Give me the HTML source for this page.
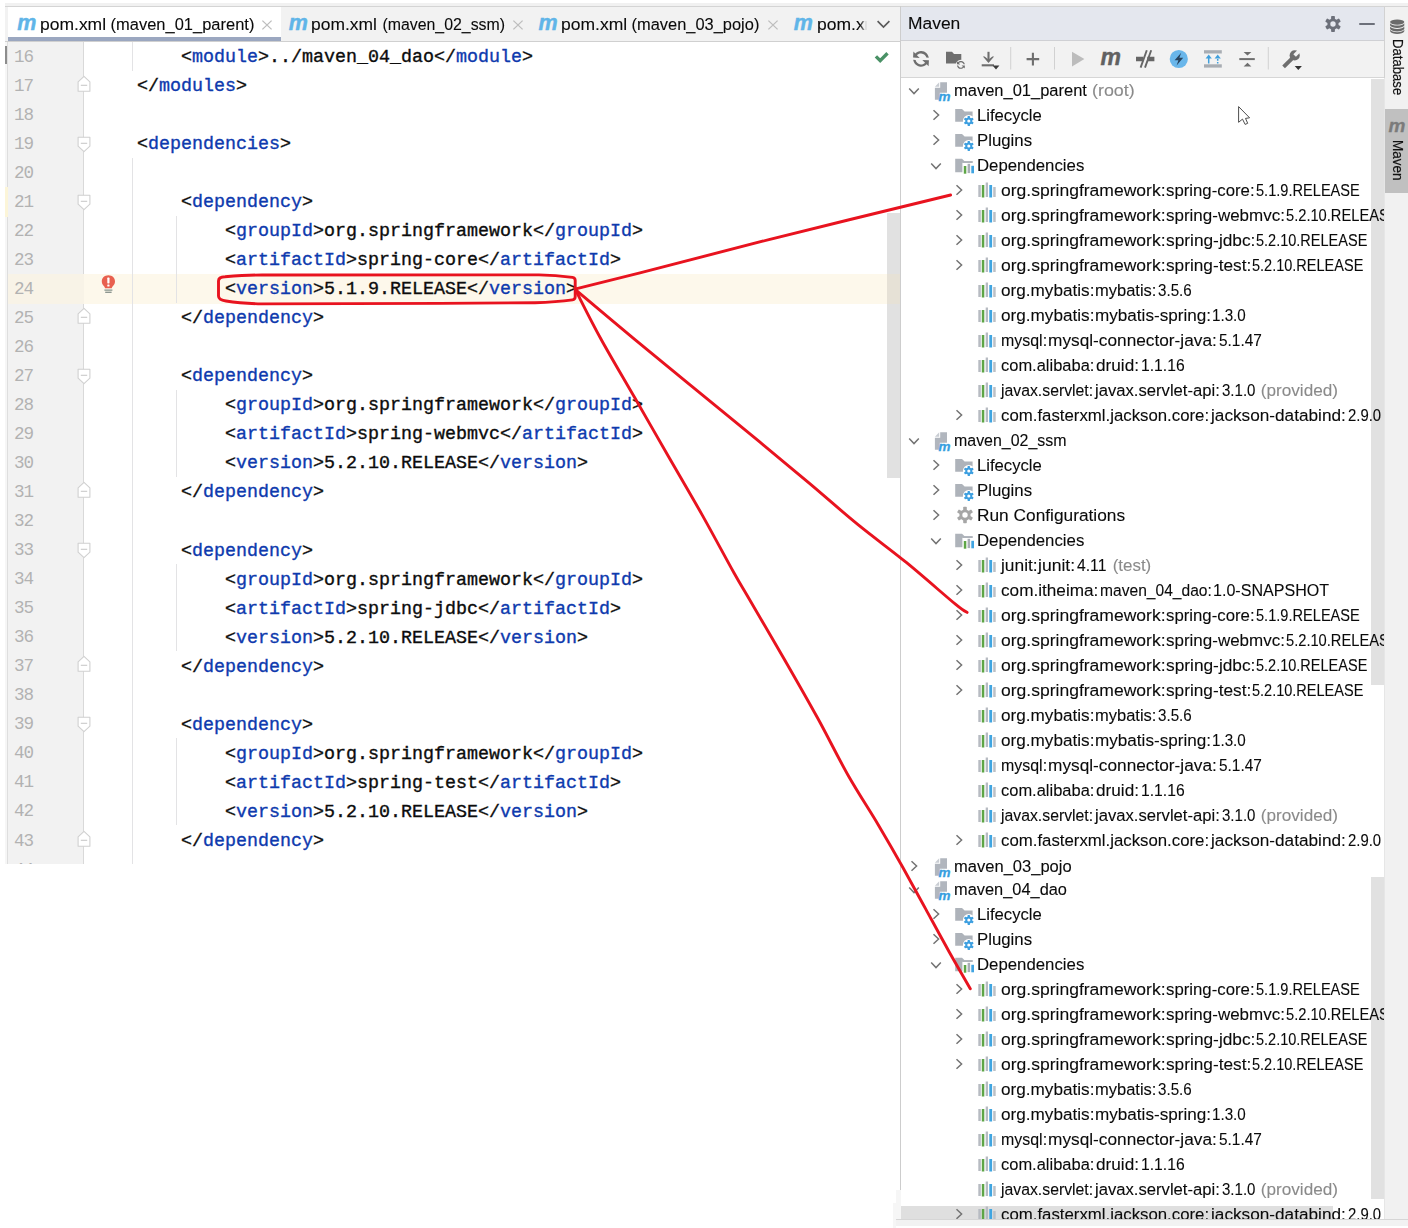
<!DOCTYPE html>
<html lang="en"><head><meta charset="utf-8"><title>pom.xml - Maven</title>
<style>
*{box-sizing:border-box;margin:0;padding:0}
html,body{width:1408px;height:1228px;overflow:hidden;background:#fff}
body{position:relative;font-family:"Liberation Sans",sans-serif;font-size:17px;color:#111}
.abs{position:absolute}
.code{position:absolute;left:0;width:887px;height:29px;line-height:29px;font-family:"Liberation Mono",monospace;font-size:18.33px;white-space:pre;color:#0c0c0c;-webkit-text-stroke:0.35px #0c0c0c;overflow:hidden}
.code .t{color:#0e3aae;-webkit-text-stroke:0.35px #0e3aae}
.ln{position:absolute;left:13.9px;width:40px;height:29px;line-height:29px;font-family:"Liberation Mono",monospace;font-size:17.6px;letter-spacing:-0.9px;color:#b2b2b2}
.row{position:absolute;transform-origin:0 0;height:25px;line-height:25px;white-space:pre;font-size:17.4px;color:#0a0a0a;-webkit-text-stroke:0.1px #0a0a0a}
.s{display:inline-block;transform-origin:0 0;white-space:pre}
.g{color:#8a8a8a;-webkit-text-stroke:0.1px #8a8a8a}
.tab{position:absolute;transform-origin:0 0;top:7px;height:30px;line-height:30px;white-space:pre;font-size:17.4px;color:#0a0a0a;-webkit-text-stroke:0.1px #0a0a0a}
.mi{position:absolute;font-style:italic;font-weight:bold;color:#60b5e8;font-size:21.5px;line-height:24px;height:24px;-webkit-text-stroke:0.45px #60b5e8}
</style></head>
<body>
<div class="abs" style="left:5px;top:3px;width:1403px;height:4px;background:#f1f1f1"></div>
<div class="abs" style="left:5px;top:6px;width:895px;height:35px;background:#f2f2f2;border-top:1px solid #d4d4d4"></div>
<div class="abs" style="left:5px;top:40.5px;width:895px;height:1px;background:#d0d0d0"></div>
<div class="abs" style="left:8px;top:7px;width:272.5px;height:30px;background:#fff"></div>
<div class="abs" style="left:8px;top:37px;width:272.5px;height:4px;background:#9ba7c0"></div>
<div class="abs" style="left:5px;top:41.5px;width:3px;height:822.5px;background:#f6f6f6"></div>
<div class="abs" style="left:7px;top:41.5px;width:1px;height:822.5px;background:#dedede"></div>
<div class="abs" style="left:8px;top:41.5px;width:75px;height:822.5px;background:#f2f2f2"></div>
<div class="abs" style="left:83px;top:41.5px;width:1px;height:822.5px;background:#d9d9d9"></div>
<div class="abs" style="left:5px;top:46px;width:2px;height:18px;background:#8d8d8d"></div>
<div class="abs" style="left:8px;top:273.74px;width:879px;height:30px;background:#fdf8eb"></div>
<div class="abs" style="left:8px;top:273.74px;width:76px;height:30px;background:#f8f3e7"></div>
<div class="abs" style="left:5px;top:186.65px;width:2.6px;height:30px;background:#fcf5d8"></div>
<div class="abs" style="left:132px;top:41.50px;width:1px;height:29.03px;background:#e3e3e5"></div>
<div class="abs" style="left:132px;top:157.62px;width:1px;height:706.38px;background:#e3e3e5"></div>
<div class="abs" style="left:176px;top:215.68px;width:1px;height:87.09px;background:#e3e3e5"></div>
<div class="abs" style="left:176px;top:389.86px;width:1px;height:87.09px;background:#e3e3e5"></div>
<div class="abs" style="left:176px;top:564.04px;width:1px;height:87.09px;background:#e3e3e5"></div>
<div class="abs" style="left:176px;top:738.22px;width:1px;height:87.09px;background:#e3e3e5"></div>
<div class="abs" style="left:887px;top:212.7px;width:13px;height:265px;background:#e1e1e1"></div>
<div class="abs" style="left:887px;top:273.74px;width:13px;height:30px;background:#e6e1d6"></div>
<div class="abs" style="left:900px;top:6px;width:1px;height:1214px;background:#cdcdcd"></div>
<div class="mi" style="left:17.3px;top:11.0px">m</div>
<div class="tab" style="left:39.79px;top:9.30px;"><span class="s" style="width:66.48px;transform:scaleX(1.0056)">pom.xml</span><span class="s" style="width:148.37px;transform:scaleX(0.9474)"> (maven_01_parent)</span></div>
<svg class="abs" style="left:261.2px;top:19px" width="12" height="12" viewBox="-6 -6 12 12"><path d="M-4.6 -4.4 L4.6 4.4 M4.6 -4.4 L-4.6 4.4" stroke="#bdbdbd" stroke-width="1.3" fill="none"/></svg>
<div class="mi" style="left:288.8px;top:11.0px">m</div>
<div class="tab" style="left:311.40px;top:9.30px;"><span class="s" style="width:66.48px;transform:scaleX(1.0024)">pom.xml</span><span class="s" style="width:127.05px;transform:scaleX(0.9128)"> (maven_02_ssm)</span></div>
<svg class="abs" style="left:511.5px;top:19px" width="12" height="12" viewBox="-6 -6 12 12"><path d="M-4.6 -4.4 L4.6 4.4 M4.6 -4.4 L-4.6 4.4" stroke="#bdbdbd" stroke-width="1.3" fill="none"/></svg>
<div class="mi" style="left:538.6px;top:11.0px">m</div>
<div class="tab" style="left:560.89px;top:9.30px;"><span class="s" style="width:66.60px;transform:scaleX(1.0071)">pom.xml</span><span class="s" style="width:132.35px;transform:scaleX(0.9442)"> (maven_03_pojo)</span></div>
<svg class="abs" style="left:767px;top:19px" width="12" height="12" viewBox="-6 -6 12 12"><path d="M-4.6 -4.4 L4.6 4.4 M4.6 -4.4 L-4.6 4.4" stroke="#bdbdbd" stroke-width="1.3" fill="none"/></svg>
<div class="mi" style="left:793.8px;top:11.0px">m</div>
<div class="tab" style="left:816.59px;top:9.30px;width:50.91px;overflow:hidden;-webkit-mask-image:linear-gradient(90deg,#000 86%,rgba(0,0,0,0) 100%);mask-image:linear-gradient(90deg,#000 86%,rgba(0,0,0,0) 100%);"><span class="s" style="width:66.07px;transform:scaleX(1.0056)">pom.xml</span></div>
<svg class="abs" style="left:876px;top:19px" width="15" height="11" viewBox="0 0 15 11"><path d="M1.6 2.2 L7.5 8 L13.4 2.2" stroke="#5a5a5a" stroke-width="1.7" fill="none"/></svg>
<div class="ln" style="top:42.70px">16</div>
<div class="code" style="top:43.00px;padding-left:181.0px">&lt;<span class="t">module</span>&gt;../maven_04_dao&lt;/<span class="t">module</span>&gt;</div>
<div class="ln" style="top:71.73px">17</div>
<div class="code" style="top:72.03px;padding-left:137.0px">&lt;/<span class="t">modules</span>&gt;</div>
<div class="ln" style="top:100.76px">18</div>
<div class="ln" style="top:129.79px">19</div>
<div class="code" style="top:130.09px;padding-left:137.0px">&lt;<span class="t">dependencies</span>&gt;</div>
<div class="ln" style="top:158.82px">20</div>
<div class="ln" style="top:187.85px">21</div>
<div class="code" style="top:188.15px;padding-left:181.0px">&lt;<span class="t">dependency</span>&gt;</div>
<div class="ln" style="top:216.88px">22</div>
<div class="code" style="top:217.18px;padding-left:225.0px">&lt;<span class="t">groupId</span>&gt;org.springframework&lt;/<span class="t">groupId</span>&gt;</div>
<div class="ln" style="top:245.91px">23</div>
<div class="code" style="top:246.21px;padding-left:225.0px">&lt;<span class="t">artifactId</span>&gt;spring-core&lt;/<span class="t">artifactId</span>&gt;</div>
<div class="ln" style="top:274.94px">24</div>
<div class="code" style="top:275.24px;padding-left:225.0px">&lt;<span class="t">version</span>&gt;5.1.9.RELEASE&lt;/<span class="t">version</span>&gt;</div>
<div class="ln" style="top:303.97px">25</div>
<div class="code" style="top:304.27px;padding-left:181.0px">&lt;/<span class="t">dependency</span>&gt;</div>
<div class="ln" style="top:333.00px">26</div>
<div class="ln" style="top:362.03px">27</div>
<div class="code" style="top:362.33px;padding-left:181.0px">&lt;<span class="t">dependency</span>&gt;</div>
<div class="ln" style="top:391.06px">28</div>
<div class="code" style="top:391.36px;padding-left:225.0px">&lt;<span class="t">groupId</span>&gt;org.springframework&lt;/<span class="t">groupId</span>&gt;</div>
<div class="ln" style="top:420.09px">29</div>
<div class="code" style="top:420.39px;padding-left:225.0px">&lt;<span class="t">artifactId</span>&gt;spring-webmvc&lt;/<span class="t">artifactId</span>&gt;</div>
<div class="ln" style="top:449.12px">30</div>
<div class="code" style="top:449.42px;padding-left:225.0px">&lt;<span class="t">version</span>&gt;5.2.10.RELEASE&lt;/<span class="t">version</span>&gt;</div>
<div class="ln" style="top:478.15px">31</div>
<div class="code" style="top:478.45px;padding-left:181.0px">&lt;/<span class="t">dependency</span>&gt;</div>
<div class="ln" style="top:507.18px">32</div>
<div class="ln" style="top:536.21px">33</div>
<div class="code" style="top:536.51px;padding-left:181.0px">&lt;<span class="t">dependency</span>&gt;</div>
<div class="ln" style="top:565.24px">34</div>
<div class="code" style="top:565.54px;padding-left:225.0px">&lt;<span class="t">groupId</span>&gt;org.springframework&lt;/<span class="t">groupId</span>&gt;</div>
<div class="ln" style="top:594.27px">35</div>
<div class="code" style="top:594.57px;padding-left:225.0px">&lt;<span class="t">artifactId</span>&gt;spring-jdbc&lt;/<span class="t">artifactId</span>&gt;</div>
<div class="ln" style="top:623.30px">36</div>
<div class="code" style="top:623.60px;padding-left:225.0px">&lt;<span class="t">version</span>&gt;5.2.10.RELEASE&lt;/<span class="t">version</span>&gt;</div>
<div class="ln" style="top:652.33px">37</div>
<div class="code" style="top:652.63px;padding-left:181.0px">&lt;/<span class="t">dependency</span>&gt;</div>
<div class="ln" style="top:681.36px">38</div>
<div class="ln" style="top:710.39px">39</div>
<div class="code" style="top:710.69px;padding-left:181.0px">&lt;<span class="t">dependency</span>&gt;</div>
<div class="ln" style="top:739.42px">40</div>
<div class="code" style="top:739.72px;padding-left:225.0px">&lt;<span class="t">groupId</span>&gt;org.springframework&lt;/<span class="t">groupId</span>&gt;</div>
<div class="ln" style="top:768.45px">41</div>
<div class="code" style="top:768.75px;padding-left:225.0px">&lt;<span class="t">artifactId</span>&gt;spring-test&lt;/<span class="t">artifactId</span>&gt;</div>
<div class="ln" style="top:797.48px">42</div>
<div class="code" style="top:797.78px;padding-left:225.0px">&lt;<span class="t">version</span>&gt;5.2.10.RELEASE&lt;/<span class="t">version</span>&gt;</div>
<div class="ln" style="top:826.51px">43</div>
<div class="code" style="top:826.81px;padding-left:181.0px">&lt;/<span class="t">dependency</span>&gt;</div>
<div class="ln" style="top:855.54px">44</div>
<svg class="abs" style="left:75.7px;top:73.83px" width="16" height="22" viewBox="-8 -11 16 22"><path d="M-5.9 6.2 H5.9 V-3.2 L0 -8.7 L-5.9 -3.2 Z" fill="#fff" stroke="#d0d0d0" stroke-width="1.1" stroke-linejoin="round"/><path d="M-3.2 0.3 H3.2" stroke="#c9c9c9" stroke-width="1.1"/></svg>
<svg class="abs" style="left:75.7px;top:131.89px" width="16" height="22" viewBox="-8 -11 16 22"><path d="M-5.9 -5.8 H5.9 V3.2 L0 8.7 L-5.9 3.2 Z" fill="#fff" stroke="#d0d0d0" stroke-width="1.1" stroke-linejoin="round"/><path d="M-3.2 0.3 H3.2" stroke="#c9c9c9" stroke-width="1.1"/></svg>
<svg class="abs" style="left:75.7px;top:189.95px" width="16" height="22" viewBox="-8 -11 16 22"><path d="M-5.9 -5.8 H5.9 V3.2 L0 8.7 L-5.9 3.2 Z" fill="#fff" stroke="#d0d0d0" stroke-width="1.1" stroke-linejoin="round"/><path d="M-3.2 0.3 H3.2" stroke="#c9c9c9" stroke-width="1.1"/></svg>
<svg class="abs" style="left:75.7px;top:306.07px" width="16" height="22" viewBox="-8 -11 16 22"><path d="M-5.9 6.2 H5.9 V-3.2 L0 -8.7 L-5.9 -3.2 Z" fill="#fff" stroke="#d0d0d0" stroke-width="1.1" stroke-linejoin="round"/><path d="M-3.2 0.3 H3.2" stroke="#c9c9c9" stroke-width="1.1"/></svg>
<svg class="abs" style="left:75.7px;top:364.13px" width="16" height="22" viewBox="-8 -11 16 22"><path d="M-5.9 -5.8 H5.9 V3.2 L0 8.7 L-5.9 3.2 Z" fill="#fff" stroke="#d0d0d0" stroke-width="1.1" stroke-linejoin="round"/><path d="M-3.2 0.3 H3.2" stroke="#c9c9c9" stroke-width="1.1"/></svg>
<svg class="abs" style="left:75.7px;top:480.25px" width="16" height="22" viewBox="-8 -11 16 22"><path d="M-5.9 6.2 H5.9 V-3.2 L0 -8.7 L-5.9 -3.2 Z" fill="#fff" stroke="#d0d0d0" stroke-width="1.1" stroke-linejoin="round"/><path d="M-3.2 0.3 H3.2" stroke="#c9c9c9" stroke-width="1.1"/></svg>
<svg class="abs" style="left:75.7px;top:538.31px" width="16" height="22" viewBox="-8 -11 16 22"><path d="M-5.9 -5.8 H5.9 V3.2 L0 8.7 L-5.9 3.2 Z" fill="#fff" stroke="#d0d0d0" stroke-width="1.1" stroke-linejoin="round"/><path d="M-3.2 0.3 H3.2" stroke="#c9c9c9" stroke-width="1.1"/></svg>
<svg class="abs" style="left:75.7px;top:654.43px" width="16" height="22" viewBox="-8 -11 16 22"><path d="M-5.9 6.2 H5.9 V-3.2 L0 -8.7 L-5.9 -3.2 Z" fill="#fff" stroke="#d0d0d0" stroke-width="1.1" stroke-linejoin="round"/><path d="M-3.2 0.3 H3.2" stroke="#c9c9c9" stroke-width="1.1"/></svg>
<svg class="abs" style="left:75.7px;top:712.49px" width="16" height="22" viewBox="-8 -11 16 22"><path d="M-5.9 -5.8 H5.9 V3.2 L0 8.7 L-5.9 3.2 Z" fill="#fff" stroke="#d0d0d0" stroke-width="1.1" stroke-linejoin="round"/><path d="M-3.2 0.3 H3.2" stroke="#c9c9c9" stroke-width="1.1"/></svg>
<svg class="abs" style="left:75.7px;top:828.61px" width="16" height="22" viewBox="-8 -11 16 22"><path d="M-5.9 6.2 H5.9 V-3.2 L0 -8.7 L-5.9 -3.2 Z" fill="#fff" stroke="#d0d0d0" stroke-width="1.1" stroke-linejoin="round"/><path d="M-3.2 0.3 H3.2" stroke="#c9c9c9" stroke-width="1.1"/></svg>
<svg class="abs" style="left:100px;top:274px" width="17" height="21" viewBox="0 0 17 21">
<path d="M8.4 1.3 C4.4 1.3 1.8 4.2 1.8 7.4 C1.8 9.6 2.9 11 4 12.2 C4.7 12.9 4.9 13.4 5 14.2 H11.8 C11.9 13.4 12.1 12.9 12.8 12.2 C13.9 11 15 9.6 15 7.4 C15 4.2 12.4 1.3 8.4 1.3 Z" fill="#e8604f"/>
<rect x="7.3" y="3.6" width="2.2" height="5.8" rx="0.6" fill="#fff"/><rect x="7.3" y="10.4" width="2.2" height="2.1" rx="0.6" fill="#fff"/>
<rect x="4.4" y="15.4" width="8" height="1.5" fill="#9aa39c"/><rect x="5.2" y="17.6" width="6.4" height="1.4" fill="#8d9690"/>
</svg>
<svg class="abs" style="left:870px;top:48px" width="24" height="20" viewBox="870 48 24 20"><path d="M875.9 56.4 L880.2 60.6 L887.5 53.3" stroke="#4a9166" stroke-width="3.4" fill="none"/></svg>
<div class="abs" style="left:0;top:864px;width:900px;height:364px;background:#fff"></div>
<div class="abs" style="left:0;top:0;width:5px;height:1228px;background:#fff"></div>
<div class="abs" style="left:901px;top:7px;width:484px;height:33.5px;background:#e4e7ee"></div>
<div class="abs" style="left:901px;top:6px;width:507px;height:1px;background:#d4d4d4"></div>
<div class="abs" style="left:901px;top:40px;width:484px;height:1px;background:#cfd0d4"></div>
<div class="abs" style="left:901px;top:41px;width:484px;height:36.5px;background:#f2f2f2"></div>
<div class="abs" style="left:901px;top:77px;width:484px;height:1px;background:#d6d6d6"></div>
<div class="row" style="left:907.80px;top:11.30px;"><span class="s" style="width:52.27px;transform:scaleX(1.0015)">Maven</span></div>
<svg class="abs" style="left:1324px;top:15px" width="18" height="18" viewBox="-9 -9 18 18">
<g fill="#6c707a"><circle r="5.6"/>
<g id="tg"><rect x="-1.9" y="-8" width="3.8" height="16" rx="0.8"/></g><rect x="-1.9" y="-8" width="3.8" height="16" rx="0.8" transform="rotate(60)"/><rect x="-1.9" y="-8" width="3.8" height="16" rx="0.8" transform="rotate(120)"/></g>
<circle r="2.7" fill="#e4e7ee"/></svg>
<div class="abs" style="left:1359px;top:22.7px;width:15.5px;height:2.5px;background:#6c707a;border-radius:1px"></div>
<svg class="abs" style="left:0;top:0" width="1408" height="80" viewBox="0 0 1408 80"><g transform="translate(910.52,48.42) scale(1.31)"><path fill="#6e6e6e" fill-rule="evenodd" d="M12.5747152,11.8852806 C11.4741474,13.1817355 9.83247882,14.0044386 7.99865879,14.0044386 C5.03907292,14.0044386 2.57997332,11.8615894 2.08820756,9.0427473 L3.94774327,9.10768372 C4.43372186,10.8898575 6.06393114,12.2000519 8.00015362,12.2000519 C9.30149237,12.2000519 10.4645985,11.6082097 11.2349873,10.6790094 L9.05000019,8.71167959 L14.0900002,8.71167959 L14.0900002,13.2498599 L12.5747152,11.8852806 Z M3.42785637,4.11741586 C4.52839138,2.82452748 6.16775464,2.00443857 7.99865879,2.00443857 C10.918604,2.00443857 13.3513802,4.09026967 13.8882946,6.8532307 L12.0226389,6.78808057 C11.5024872,5.05935553 9.89838095,3.8000774 8.00015362,3.8000774 C6.69867367,3.8000774 5.53545628,4.39204806 4.76506921,5.32142241 L6.95000019,7.28875221 L1.91000019,7.28875221 L1.91000019,2.75057193 L3.42785637,4.11741586 Z" transform="rotate(3 8 8.004)"/></g><path d="M946 51.8 H952 L954 54 H961.3 V63.6 H946 Z" fill="#6e6e6e"/><circle cx="960.9" cy="64.9" r="5.2" fill="#f2f2f2"/><g transform="translate(955.62,59.62) scale(0.66)"><path fill="#6e6e6e" fill-rule="evenodd" d="M12.5747152,11.8852806 C11.4741474,13.1817355 9.83247882,14.0044386 7.99865879,14.0044386 C5.03907292,14.0044386 2.57997332,11.8615894 2.08820756,9.0427473 L3.94774327,9.10768372 C4.43372186,10.8898575 6.06393114,12.2000519 8.00015362,12.2000519 C9.30149237,12.2000519 10.4645985,11.6082097 11.2349873,10.6790094 L9.05000019,8.71167959 L14.0900002,8.71167959 L14.0900002,13.2498599 L12.5747152,11.8852806 Z M3.42785637,4.11741586 C4.52839138,2.82452748 6.16775464,2.00443857 7.99865879,2.00443857 C10.918604,2.00443857 13.3513802,4.09026967 13.8882946,6.8532307 L12.0226389,6.78808057 C11.5024872,5.05935553 9.89838095,3.8000774 8.00015362,3.8000774 C6.69867367,3.8000774 5.53545628,4.39204806 4.76506921,5.32142241 L6.95000019,7.28875221 L1.91000019,7.28875221 L1.91000019,2.75057193 L3.42785637,4.11741586 Z" transform="rotate(3 8 8.004)"/></g><path d="M988.5 51.8 V61" stroke="#6e6e6e" stroke-width="2.1" fill="none"/><path d="M982.9 56.6 L988.5 62.9 L994.1 56.6 L992.4 56.6 L988.5 59.6 L984.6 56.6 Z" fill="#6e6e6e"/><path d="M981.7 65.3 H994" stroke="#6e6e6e" stroke-width="2.1"/><path d="M992.6 65.6 H999.4 L996 69.4 Z" fill="#3a3a3a"/><rect x="1010.2" y="47" width="1" height="22.5" fill="#d1d1d1"/><path d="M1026.6 59.1 H1039.2 M1032.9 52.8 V65.4" stroke="#6e6e6e" stroke-width="2.1"/><rect x="1054" y="47" width="1" height="22.5" fill="#d1d1d1"/><path d="M1072 51.8 V66.4 L1084.4 59.1 Z" fill="#bcbcbc"/><path d="M1136 59 H1143.3 M1147.3 59 H1154.4" stroke="#666" stroke-width="4.3"/><path d="M1146.8 50.2 L1140.6 67.6 M1151.2 50.2 L1145 67.6" stroke="#666" stroke-width="1.9"/><circle cx="1178.8" cy="59" r="9.1" fill="#69b6ea"/><path d="M1181.2 52.8 L1174.6 60.2 H1178.4 L1176.6 65.6 L1183.2 57.8 H1179.4 Z" fill="#27435e"/><rect x="1204" y="50.2" width="17.8" height="3.3" fill="#a8adb3"/><rect x="1204" y="64.3" width="17.8" height="3.3" fill="#a8adb3"/><path d="M1208.7 63.5 V57" stroke="#3f9fdc" stroke-width="1.5"/><path d="M1205.6 58.6 L1208.7 54.6 L1211.8 58.6 Z" fill="#3f9fdc"/><path d="M1217.7 63.5 V57" stroke="#3f9fdc" stroke-width="1.5" stroke-dasharray="1.6 1.2"/><path d="M1214.6 58.6 L1217.7 54.6 L1220.8 58.6 Z" fill="#3f9fdc"/><path d="M1243.6 51.9 H1251.4 L1247.5 55.6 Z M1243.6 66.5 H1251.4 L1247.5 62.8 Z" fill="#6e6e6e"/><path d="M1239.3 59.1 H1254.8" stroke="#6e6e6e" stroke-width="2"/><rect x="1267.8" y="47" width="1" height="22.5" fill="#d1d1d1"/><path d="M1283.6 66.9 L1293.2 57.4" stroke="#6e6e6e" stroke-width="3.9"/><circle cx="1294.7" cy="55.4" r="5.1" fill="#6e6e6e"/><path d="M1294.6 55.5 L1300.6 49.5" stroke="#f2f2f2" stroke-width="3.7"/><path d="M1294.7 66 H1301.9 L1298.3 70 Z" fill="#333"/></svg>
<div class="abs" style="left:1100.5px;top:44.6px;font-size:23px;line-height:24px;font-style:italic;font-weight:bold;color:#616161;-webkit-text-stroke:0.4px #616161">m</div>
<div class="abs" style="left:1385px;top:7px;width:23px;height:1213px;background:#f1f1f1"></div>
<div class="abs" style="left:1384px;top:7px;width:1px;height:71px;background:#d2d2d2"></div>
<div class="abs" style="left:1384px;top:78px;width:1px;height:1141px;background:#e6e6e6"></div>
<div class="abs" style="left:1385px;top:108.5px;width:23px;height:84.7px;background:#c0c0c0"></div>
<div class="abs" id="vdb" style="left:1386.6px;top:39.2px;width:22px;font-size:15px;line-height:22px;writing-mode:vertical-rl;white-space:pre;transform-origin:0 0;transform:scaleY(0.875);color:#111;-webkit-text-stroke:0.2px #111">Database</div>
<div class="abs" id="vmv" style="left:1386.6px;top:140.3px;width:22px;font-size:15px;line-height:22px;writing-mode:vertical-rl;white-space:pre;transform-origin:0 0;transform:scaleY(0.9);color:#111;-webkit-text-stroke:0.2px #111">Maven</div>
<div class="abs" style="left:1388.6px;top:115.6px;font-size:19px;line-height:20px;font-style:italic;font-weight:bold;color:#7b7b7b;-webkit-text-stroke:0.3px #7b7b7b">m</div>
<svg class="abs" style="left:1389px;top:18px" width="17" height="17" viewBox="0 0 17 17"><g fill="#6a6a6a" transform="translate(0 0.2) scale(1 0.95)">
<ellipse cx="8.2" cy="4.1" rx="7.1" ry="2.8"/>
<path d="M1.1 5.2 C2.6 8.67 13.8 8.67 15.3 5.2 V7.8 C13.8 11.27 2.6 11.27 1.1 7.8 Z"/>
<path d="M1.1 8.7 C2.6 12.17 13.8 12.17 15.3 8.7 V11.3 C13.8 14.77 2.6 14.77 1.1 11.3 Z"/>
<path d="M1.1 12.2 C2.6 15.67 13.8 15.67 15.3 12.2 V13.8 C13.8 17.5 2.6 17.5 1.1 13.8 Z"/></g></svg>
<div class="abs" style="left:1371.3px;top:79.3px;width:12.7px;height:605.5px;background:#e1e1e1"></div>
<div class="abs" style="left:1371.3px;top:876.5px;width:12.7px;height:322.8px;background:#e1e1e1"></div>
<div class="abs" style="left:901px;top:1206px;width:431.5px;height:13px;background:#dfdfdf"></div>
<div class="abs" style="left:896px;top:1190px;width:4.5px;height:29px;background:#f6f6f6"></div>
<div class="abs" style="left:893px;top:1202.5px;width:3.2px;height:25.5px;background:#f6f6f6"></div>
<div class="abs" style="left:896px;top:1219px;width:512px;height:7px;background:#f2f2f2;border-top:1px solid #d6d6d6"></div>
<div class="abs" style="left:896.2px;top:1226px;width:512px;height:2px;background:#fff"></div>
<div class="abs" style="left:901px;top:78px;width:483px;height:1141px;overflow:hidden"><div class="abs" style="left:-901px;top:-78px;width:1408px;height:1228px">
<svg class="abs" style="left:906.5px;top:85.5px" width="14" height="10" viewBox="-7 -5 14 10"><path d="M-4.8 -2.4 L0 2.6 L4.8 -2.4" stroke="#737373" stroke-width="1.5" fill="none"/></svg>
<svg class="abs" style="left:933.0px;top:80.2px" width="20" height="22" viewBox="0 0 20 22">
<path d="M7.2 2.3 H14 V12.8 H6.8 V19.7 H1.9 V7.8 H7.2 Z" fill="#b1b6be"/><path d="M6.2 2.3 V6.8 H1.9 Z" fill="#c9cdd3"/>
<text x="5.4" y="20.8" font-family="Liberation Sans, sans-serif" font-size="13.5" font-style="italic" font-weight="bold" fill="#389fe0" stroke="#389fe0" stroke-width="0.3">m</text></svg>
<div class="row" style="left:954.05px;top:78.00px;"><span class="s" style="width:133.45px;transform:scaleX(0.9479)">maven_01_parent</span><span class="s g" style="width:47.71px;transform:scaleX(1.0287)"> (root)</span></div>
<svg class="abs" style="left:931.0px;top:108.2px" width="10" height="14" viewBox="-5 -7 10 14"><path d="M-2.5 -4.8 L2.6 0 L-2.5 4.8" stroke="#737373" stroke-width="1.5" fill="none"/></svg>
<svg class="abs" style="left:955.0px;top:105.2px" width="22" height="22" viewBox="0 0 22 22">
<path d="M0.2 3.9 H7 L9.6 6.4 H17.6 V16.7 H0.2 Z" fill="#aeb3ba"/><g transform="translate(13.8,16)"><circle r="5.9" fill="#fff"/><g fill="#3d9fe0"><circle r="3.5"/><rect x="-1.15" y="-5" width="2.3" height="10" rx="0.5" transform="rotate(0)"/><rect x="-1.15" y="-5" width="2.3" height="10" rx="0.5" transform="rotate(60)"/><rect x="-1.15" y="-5" width="2.3" height="10" rx="0.5" transform="rotate(120)"/></g><circle r="1.55" fill="#fff"/></g></svg>
<div class="row" style="left:977.14px;top:103.00px;"><span class="s" style="width:64.80px;transform:scaleX(0.9577)">Lifecycle</span></div>
<svg class="abs" style="left:931.0px;top:133.2px" width="10" height="14" viewBox="-5 -7 10 14"><path d="M-2.5 -4.8 L2.6 0 L-2.5 4.8" stroke="#737373" stroke-width="1.5" fill="none"/></svg>
<svg class="abs" style="left:955.0px;top:130.2px" width="22" height="22" viewBox="0 0 22 22">
<path d="M0.2 3.9 H7 L9.6 6.4 H17.6 V16.7 H0.2 Z" fill="#aeb3ba"/><g transform="translate(13.8,16)"><circle r="5.9" fill="#fff"/><g fill="#3d9fe0"><circle r="3.5"/><rect x="-1.15" y="-5" width="2.3" height="10" rx="0.5" transform="rotate(0)"/><rect x="-1.15" y="-5" width="2.3" height="10" rx="0.5" transform="rotate(60)"/><rect x="-1.15" y="-5" width="2.3" height="10" rx="0.5" transform="rotate(120)"/></g><circle r="1.55" fill="#fff"/></g></svg>
<div class="row" style="left:977.13px;top:128.00px;"><span class="s" style="width:55.07px;transform:scaleX(0.9655)">Plugins</span></div>
<svg class="abs" style="left:929.0px;top:160.5px" width="14" height="10" viewBox="-7 -5 14 10"><path d="M-4.8 -2.4 L0 2.6 L4.8 -2.4" stroke="#737373" stroke-width="1.5" fill="none"/></svg>
<svg class="abs" style="left:955.0px;top:155.2px" width="22" height="22" viewBox="0 0 22 22">
<path d="M0.2 3.7 H7 L9.6 6.2 H17.6 V17.2 H0.2 Z" fill="#aeb3ba"/><rect x="7.4" y="7.6" width="14" height="13" fill="#fff"/>
<path d="M7.4 6.2 H17.6 V8 H7.4 Z" fill="#aeb3ba"/>
<rect x="8.8" y="11" width="2.5" height="7.7" fill="#5da546"/><rect x="12.6" y="8.8" width="2.5" height="9.3" fill="#a9aeb6"/><rect x="16.3" y="10.8" width="2.7" height="7.5" fill="#3fa4e2"/></svg>
<div class="row" style="left:977.14px;top:153.00px;"><span class="s" style="width:107.27px;transform:scaleX(0.9648)">Dependencies</span></div>
<svg class="abs" style="left:954.0px;top:183.2px" width="10" height="14" viewBox="-5 -7 10 14"><path d="M-2.5 -4.8 L2.6 0 L-2.5 4.8" stroke="#737373" stroke-width="1.5" fill="none"/></svg>
<svg class="abs" style="left:978.0px;top:181.2px" width="19" height="18" viewBox="0 0 19 18">
<rect x="0.3" y="4" width="2.5" height="12" fill="#b7bbc2"/><rect x="3.8" y="4" width="2.5" height="12.5" fill="#5ea547"/><rect x="7.7" y="1.5" width="2.3" height="14.5" fill="#b7bbc2"/><rect x="11.3" y="4" width="2.8" height="12.5" fill="#40a5e1"/><rect x="15.2" y="6" width="2.5" height="10" fill="#bcc0c6"/></svg>
<div class="row" style="left:1001.30px;top:178.00px;"><span class="s" style="width:164.90px;transform:scaleX(1.0074)">org.springframework:</span><span class="s" style="width:89.80px;transform:scaleX(0.9650)">spring-core:</span><span class="s" style="width:103.80px;transform:scaleX(0.8389)">5.1.9.RELEASE</span></div>
<svg class="abs" style="left:954.0px;top:208.2px" width="10" height="14" viewBox="-5 -7 10 14"><path d="M-2.5 -4.8 L2.6 0 L-2.5 4.8" stroke="#737373" stroke-width="1.5" fill="none"/></svg>
<svg class="abs" style="left:978.0px;top:206.2px" width="19" height="18" viewBox="0 0 19 18">
<rect x="0.3" y="4" width="2.5" height="12" fill="#b7bbc2"/><rect x="3.8" y="4" width="2.5" height="12.5" fill="#5ea547"/><rect x="7.7" y="1.5" width="2.3" height="14.5" fill="#b7bbc2"/><rect x="11.3" y="4" width="2.8" height="12.5" fill="#40a5e1"/><rect x="15.2" y="6" width="2.5" height="10" fill="#bcc0c6"/></svg>
<div class="row" style="left:1001.30px;top:203.00px;"><span class="s" style="width:164.90px;transform:scaleX(1.0074)">org.springframework:</span><span class="s" style="width:119.80px;transform:scaleX(0.9765)">spring-webmvc:</span><span class="s" style="width:112.51px;transform:scaleX(0.8433)">5.2.10.RELEASE</span></div>
<svg class="abs" style="left:954.0px;top:233.2px" width="10" height="14" viewBox="-5 -7 10 14"><path d="M-2.5 -4.8 L2.6 0 L-2.5 4.8" stroke="#737373" stroke-width="1.5" fill="none"/></svg>
<svg class="abs" style="left:978.0px;top:231.2px" width="19" height="18" viewBox="0 0 19 18">
<rect x="0.3" y="4" width="2.5" height="12" fill="#b7bbc2"/><rect x="3.8" y="4" width="2.5" height="12.5" fill="#5ea547"/><rect x="7.7" y="1.5" width="2.3" height="14.5" fill="#b7bbc2"/><rect x="11.3" y="4" width="2.8" height="12.5" fill="#40a5e1"/><rect x="15.2" y="6" width="2.5" height="10" fill="#bcc0c6"/></svg>
<div class="row" style="left:1001.30px;top:228.00px;"><span class="s" style="width:164.90px;transform:scaleX(1.0074)">org.springframework:</span><span class="s" style="width:90.30px;transform:scaleX(0.9948)">spring-jdbc:</span><span class="s" style="width:111.30px;transform:scaleX(0.8343)">5.2.10.RELEASE</span></div>
<svg class="abs" style="left:954.0px;top:258.2px" width="10" height="14" viewBox="-5 -7 10 14"><path d="M-2.5 -4.8 L2.6 0 L-2.5 4.8" stroke="#737373" stroke-width="1.5" fill="none"/></svg>
<svg class="abs" style="left:978.0px;top:256.2px" width="19" height="18" viewBox="0 0 19 18">
<rect x="0.3" y="4" width="2.5" height="12" fill="#b7bbc2"/><rect x="3.8" y="4" width="2.5" height="12.5" fill="#5ea547"/><rect x="7.7" y="1.5" width="2.3" height="14.5" fill="#b7bbc2"/><rect x="11.3" y="4" width="2.8" height="12.5" fill="#40a5e1"/><rect x="15.2" y="6" width="2.5" height="10" fill="#bcc0c6"/></svg>
<div class="row" style="left:1001.30px;top:253.00px;"><span class="s" style="width:164.90px;transform:scaleX(1.0074)">org.springframework:</span><span class="s" style="width:86.10px;transform:scaleX(0.9908)">spring-test:</span><span class="s" style="width:111.30px;transform:scaleX(0.8343)">5.2.10.RELEASE</span></div>
<svg class="abs" style="left:978.0px;top:281.2px" width="19" height="18" viewBox="0 0 19 18">
<rect x="0.3" y="4" width="2.5" height="12" fill="#b7bbc2"/><rect x="3.8" y="4" width="2.5" height="12.5" fill="#5ea547"/><rect x="7.7" y="1.5" width="2.3" height="14.5" fill="#b7bbc2"/><rect x="11.3" y="4" width="2.8" height="12.5" fill="#40a5e1"/><rect x="15.2" y="6" width="2.5" height="10" fill="#bcc0c6"/></svg>
<div class="row" style="left:1001.40px;top:278.00px;"><span class="s" style="width:93.65px;transform:scaleX(0.9863)">org.mybatis:</span><span class="s" style="width:63.45px;transform:scaleX(0.9489)">mybatis:</span><span class="s" style="width:33.69px;transform:scaleX(0.8709)">3.5.6</span></div>
<svg class="abs" style="left:978.0px;top:306.2px" width="19" height="18" viewBox="0 0 19 18">
<rect x="0.3" y="4" width="2.5" height="12" fill="#b7bbc2"/><rect x="3.8" y="4" width="2.5" height="12.5" fill="#5ea547"/><rect x="7.7" y="1.5" width="2.3" height="14.5" fill="#b7bbc2"/><rect x="11.3" y="4" width="2.8" height="12.5" fill="#40a5e1"/><rect x="15.2" y="6" width="2.5" height="10" fill="#bcc0c6"/></svg>
<div class="row" style="left:1001.40px;top:303.00px;"><span class="s" style="width:93.62px;transform:scaleX(0.9863)">org.mybatis:</span><span class="s" style="width:117.21px;transform:scaleX(0.9839)">mybatis-spring:</span><span class="s" style="width:33.76px;transform:scaleX(0.8728)">1.3.0</span></div>
<svg class="abs" style="left:978.0px;top:331.2px" width="19" height="18" viewBox="0 0 19 18">
<rect x="0.3" y="4" width="2.5" height="12" fill="#b7bbc2"/><rect x="3.8" y="4" width="2.5" height="12.5" fill="#5ea547"/><rect x="7.7" y="1.5" width="2.3" height="14.5" fill="#b7bbc2"/><rect x="11.3" y="4" width="2.8" height="12.5" fill="#40a5e1"/><rect x="15.2" y="6" width="2.5" height="10" fill="#bcc0c6"/></svg>
<div class="row" style="left:1001.38px;top:328.00px;"><span class="s" style="width:46.72px;transform:scaleX(0.9171)">mysql:</span><span class="s" style="width:170.59px;transform:scaleX(0.9924)">mysql-connector-java:</span><span class="s" style="width:42.79px;transform:scaleX(0.8851)">5.1.47</span></div>
<svg class="abs" style="left:978.0px;top:356.2px" width="19" height="18" viewBox="0 0 19 18">
<rect x="0.3" y="4" width="2.5" height="12" fill="#b7bbc2"/><rect x="3.8" y="4" width="2.5" height="12.5" fill="#5ea547"/><rect x="7.7" y="1.5" width="2.3" height="14.5" fill="#b7bbc2"/><rect x="11.3" y="4" width="2.8" height="12.5" fill="#40a5e1"/><rect x="15.2" y="6" width="2.5" height="10" fill="#bcc0c6"/></svg>
<div class="row" style="left:1001.40px;top:353.00px;"><span class="s" style="width:95.00px;transform:scaleX(0.9471)">com.alibaba:</span><span class="s" style="width:44.80px;transform:scaleX(0.9890)">druid:</span><span class="s" style="width:43.61px;transform:scaleX(0.9019)">1.1.16</span></div>
<svg class="abs" style="left:978.0px;top:381.2px" width="19" height="18" viewBox="0 0 19 18">
<rect x="0.3" y="4" width="2.5" height="12" fill="#b7bbc2"/><rect x="3.8" y="4" width="2.5" height="12.5" fill="#5ea547"/><rect x="7.7" y="1.5" width="2.3" height="14.5" fill="#b7bbc2"/><rect x="11.3" y="4" width="2.8" height="12.5" fill="#40a5e1"/><rect x="15.2" y="6" width="2.5" height="10" fill="#bcc0c6"/></svg>
<div class="row" style="left:1001.01px;top:378.00px;"><span class="s" style="width:93.85px;transform:scaleX(0.9080)">javax.servlet:</span><span class="s" style="width:127.44px;transform:scaleX(0.9568)">javax.servlet-api:</span><span class="s" style="width:33.74px;transform:scaleX(0.8656)">3.1.0</span><span class="s g" style="width:82.04px;transform:scaleX(0.9869)"> (provided)</span></div>
<svg class="abs" style="left:954.0px;top:408.2px" width="10" height="14" viewBox="-5 -7 10 14"><path d="M-2.5 -4.8 L2.6 0 L-2.5 4.8" stroke="#737373" stroke-width="1.5" fill="none"/></svg>
<svg class="abs" style="left:978.0px;top:406.2px" width="19" height="18" viewBox="0 0 19 18">
<rect x="0.3" y="4" width="2.5" height="12" fill="#b7bbc2"/><rect x="3.8" y="4" width="2.5" height="12.5" fill="#5ea547"/><rect x="7.7" y="1.5" width="2.3" height="14.5" fill="#b7bbc2"/><rect x="11.3" y="4" width="2.8" height="12.5" fill="#40a5e1"/><rect x="15.2" y="6" width="2.5" height="10" fill="#bcc0c6"/></svg>
<div class="row" style="left:1001.30px;top:403.00px;"><span class="s" style="width:209.69px;transform:scaleX(0.9656)">com.fasterxml.jackson.core:</span><span class="s" style="width:137.11px;transform:scaleX(0.9891)">jackson-databind:</span><span class="s" style="width:33.07px;transform:scaleX(0.8551)">2.9.0</span></div>
<svg class="abs" style="left:906.5px;top:435.5px" width="14" height="10" viewBox="-7 -5 14 10"><path d="M-4.8 -2.4 L0 2.6 L4.8 -2.4" stroke="#737373" stroke-width="1.5" fill="none"/></svg>
<svg class="abs" style="left:933.0px;top:430.2px" width="20" height="22" viewBox="0 0 20 22">
<path d="M7.2 2.3 H14 V12.8 H6.8 V19.7 H1.9 V7.8 H7.2 Z" fill="#b1b6be"/><path d="M6.2 2.3 V6.8 H1.9 Z" fill="#c9cdd3"/>
<text x="5.4" y="20.8" font-family="Liberation Sans, sans-serif" font-size="13.5" font-style="italic" font-weight="bold" fill="#389fe0" stroke="#389fe0" stroke-width="0.3">m</text></svg>
<div class="row" style="left:954.08px;top:428.00px;"><span class="s" style="width:112.56px;transform:scaleX(0.9169)">maven_02_ssm</span></div>
<svg class="abs" style="left:931.0px;top:458.2px" width="10" height="14" viewBox="-5 -7 10 14"><path d="M-2.5 -4.8 L2.6 0 L-2.5 4.8" stroke="#737373" stroke-width="1.5" fill="none"/></svg>
<svg class="abs" style="left:955.0px;top:455.2px" width="22" height="22" viewBox="0 0 22 22">
<path d="M0.2 3.9 H7 L9.6 6.4 H17.6 V16.7 H0.2 Z" fill="#aeb3ba"/><g transform="translate(13.8,16)"><circle r="5.9" fill="#fff"/><g fill="#3d9fe0"><circle r="3.5"/><rect x="-1.15" y="-5" width="2.3" height="10" rx="0.5" transform="rotate(0)"/><rect x="-1.15" y="-5" width="2.3" height="10" rx="0.5" transform="rotate(60)"/><rect x="-1.15" y="-5" width="2.3" height="10" rx="0.5" transform="rotate(120)"/></g><circle r="1.55" fill="#fff"/></g></svg>
<div class="row" style="left:977.14px;top:453.00px;"><span class="s" style="width:64.80px;transform:scaleX(0.9577)">Lifecycle</span></div>
<svg class="abs" style="left:931.0px;top:483.2px" width="10" height="14" viewBox="-5 -7 10 14"><path d="M-2.5 -4.8 L2.6 0 L-2.5 4.8" stroke="#737373" stroke-width="1.5" fill="none"/></svg>
<svg class="abs" style="left:955.0px;top:480.2px" width="22" height="22" viewBox="0 0 22 22">
<path d="M0.2 3.9 H7 L9.6 6.4 H17.6 V16.7 H0.2 Z" fill="#aeb3ba"/><g transform="translate(13.8,16)"><circle r="5.9" fill="#fff"/><g fill="#3d9fe0"><circle r="3.5"/><rect x="-1.15" y="-5" width="2.3" height="10" rx="0.5" transform="rotate(0)"/><rect x="-1.15" y="-5" width="2.3" height="10" rx="0.5" transform="rotate(60)"/><rect x="-1.15" y="-5" width="2.3" height="10" rx="0.5" transform="rotate(120)"/></g><circle r="1.55" fill="#fff"/></g></svg>
<div class="row" style="left:977.13px;top:478.00px;"><span class="s" style="width:55.07px;transform:scaleX(0.9655)">Plugins</span></div>
<svg class="abs" style="left:931.0px;top:508.2px" width="10" height="14" viewBox="-5 -7 10 14"><path d="M-2.5 -4.8 L2.6 0 L-2.5 4.8" stroke="#737373" stroke-width="1.5" fill="none"/></svg>
<svg class="abs" style="left:955.0px;top:505.2px" width="20" height="20" viewBox="-10 -10 20 20">
<g fill="#a6a6a6"><circle r="5.6"/><rect x="-1.8" y="-8.2" width="3.6" height="16.4" rx="0.7" transform="rotate(0)"/><rect x="-1.8" y="-8.2" width="3.6" height="16.4" rx="0.7" transform="rotate(60)"/><rect x="-1.8" y="-8.2" width="3.6" height="16.4" rx="0.7" transform="rotate(120)"/></g><circle r="2.7" fill="#fff"/></svg>
<div class="row" style="left:977.11px;top:503.00px;"><span class="s" style="width:148.09px;transform:scaleX(0.9947)">Run Configurations</span></div>
<svg class="abs" style="left:929.0px;top:535.5px" width="14" height="10" viewBox="-7 -5 14 10"><path d="M-4.8 -2.4 L0 2.6 L4.8 -2.4" stroke="#737373" stroke-width="1.5" fill="none"/></svg>
<svg class="abs" style="left:955.0px;top:530.2px" width="22" height="22" viewBox="0 0 22 22">
<path d="M0.2 3.7 H7 L9.6 6.2 H17.6 V17.2 H0.2 Z" fill="#aeb3ba"/><rect x="7.4" y="7.6" width="14" height="13" fill="#fff"/>
<path d="M7.4 6.2 H17.6 V8 H7.4 Z" fill="#aeb3ba"/>
<rect x="8.8" y="11" width="2.5" height="7.7" fill="#5da546"/><rect x="12.6" y="8.8" width="2.5" height="9.3" fill="#a9aeb6"/><rect x="16.3" y="10.8" width="2.7" height="7.5" fill="#3fa4e2"/></svg>
<div class="row" style="left:977.14px;top:528.00px;"><span class="s" style="width:107.27px;transform:scaleX(0.9648)">Dependencies</span></div>
<svg class="abs" style="left:954.0px;top:558.2px" width="10" height="14" viewBox="-5 -7 10 14"><path d="M-2.5 -4.8 L2.6 0 L-2.5 4.8" stroke="#737373" stroke-width="1.5" fill="none"/></svg>
<svg class="abs" style="left:978.0px;top:556.2px" width="19" height="18" viewBox="0 0 19 18">
<rect x="0.3" y="4" width="2.5" height="12" fill="#b7bbc2"/><rect x="3.8" y="4" width="2.5" height="12.5" fill="#5ea547"/><rect x="7.7" y="1.5" width="2.3" height="14.5" fill="#b7bbc2"/><rect x="11.3" y="4" width="2.8" height="12.5" fill="#40a5e1"/><rect x="15.2" y="6" width="2.5" height="10" fill="#bcc0c6"/></svg>
<div class="row" style="left:1001.00px;top:553.00px;"><span class="s" style="width:37.31px;transform:scaleX(0.9972)">junit:</span><span class="s" style="width:38.69px;transform:scaleX(1.0081)">junit:</span><span class="s" style="width:30.93px;transform:scaleX(0.9033)">4.11</span><span class="s g" style="width:43.24px;transform:scaleX(0.9730)"> (test)</span></div>
<svg class="abs" style="left:954.0px;top:583.2px" width="10" height="14" viewBox="-5 -7 10 14"><path d="M-2.5 -4.8 L2.6 0 L-2.5 4.8" stroke="#737373" stroke-width="1.5" fill="none"/></svg>
<svg class="abs" style="left:978.0px;top:581.2px" width="19" height="18" viewBox="0 0 19 18">
<rect x="0.3" y="4" width="2.5" height="12" fill="#b7bbc2"/><rect x="3.8" y="4" width="2.5" height="12.5" fill="#5ea547"/><rect x="7.7" y="1.5" width="2.3" height="14.5" fill="#b7bbc2"/><rect x="11.3" y="4" width="2.8" height="12.5" fill="#40a5e1"/><rect x="15.2" y="6" width="2.5" height="10" fill="#bcc0c6"/></svg>
<div class="row" style="left:1001.20px;top:578.00px;"><span class="s" style="width:98.50px;transform:scaleX(0.9872)">com.itheima:</span><span class="s" style="width:113.07px;transform:scaleX(0.8967)">maven_04_dao:</span><span class="s" style="width:116.08px;transform:scaleX(0.9239)">1.0-SNAPSHOT</span></div>
<svg class="abs" style="left:954.0px;top:608.2px" width="10" height="14" viewBox="-5 -7 10 14"><path d="M-2.5 -4.8 L2.6 0 L-2.5 4.8" stroke="#737373" stroke-width="1.5" fill="none"/></svg>
<svg class="abs" style="left:978.0px;top:606.2px" width="19" height="18" viewBox="0 0 19 18">
<rect x="0.3" y="4" width="2.5" height="12" fill="#b7bbc2"/><rect x="3.8" y="4" width="2.5" height="12.5" fill="#5ea547"/><rect x="7.7" y="1.5" width="2.3" height="14.5" fill="#b7bbc2"/><rect x="11.3" y="4" width="2.8" height="12.5" fill="#40a5e1"/><rect x="15.2" y="6" width="2.5" height="10" fill="#bcc0c6"/></svg>
<div class="row" style="left:1001.30px;top:603.00px;"><span class="s" style="width:164.90px;transform:scaleX(1.0074)">org.springframework:</span><span class="s" style="width:89.80px;transform:scaleX(0.9650)">spring-core:</span><span class="s" style="width:103.80px;transform:scaleX(0.8389)">5.1.9.RELEASE</span></div>
<svg class="abs" style="left:954.0px;top:633.2px" width="10" height="14" viewBox="-5 -7 10 14"><path d="M-2.5 -4.8 L2.6 0 L-2.5 4.8" stroke="#737373" stroke-width="1.5" fill="none"/></svg>
<svg class="abs" style="left:978.0px;top:631.2px" width="19" height="18" viewBox="0 0 19 18">
<rect x="0.3" y="4" width="2.5" height="12" fill="#b7bbc2"/><rect x="3.8" y="4" width="2.5" height="12.5" fill="#5ea547"/><rect x="7.7" y="1.5" width="2.3" height="14.5" fill="#b7bbc2"/><rect x="11.3" y="4" width="2.8" height="12.5" fill="#40a5e1"/><rect x="15.2" y="6" width="2.5" height="10" fill="#bcc0c6"/></svg>
<div class="row" style="left:1001.30px;top:628.00px;"><span class="s" style="width:164.90px;transform:scaleX(1.0074)">org.springframework:</span><span class="s" style="width:119.80px;transform:scaleX(0.9765)">spring-webmvc:</span><span class="s" style="width:112.51px;transform:scaleX(0.8433)">5.2.10.RELEASE</span></div>
<svg class="abs" style="left:954.0px;top:658.2px" width="10" height="14" viewBox="-5 -7 10 14"><path d="M-2.5 -4.8 L2.6 0 L-2.5 4.8" stroke="#737373" stroke-width="1.5" fill="none"/></svg>
<svg class="abs" style="left:978.0px;top:656.2px" width="19" height="18" viewBox="0 0 19 18">
<rect x="0.3" y="4" width="2.5" height="12" fill="#b7bbc2"/><rect x="3.8" y="4" width="2.5" height="12.5" fill="#5ea547"/><rect x="7.7" y="1.5" width="2.3" height="14.5" fill="#b7bbc2"/><rect x="11.3" y="4" width="2.8" height="12.5" fill="#40a5e1"/><rect x="15.2" y="6" width="2.5" height="10" fill="#bcc0c6"/></svg>
<div class="row" style="left:1001.30px;top:653.00px;"><span class="s" style="width:164.90px;transform:scaleX(1.0074)">org.springframework:</span><span class="s" style="width:90.30px;transform:scaleX(0.9948)">spring-jdbc:</span><span class="s" style="width:111.30px;transform:scaleX(0.8343)">5.2.10.RELEASE</span></div>
<svg class="abs" style="left:954.0px;top:683.2px" width="10" height="14" viewBox="-5 -7 10 14"><path d="M-2.5 -4.8 L2.6 0 L-2.5 4.8" stroke="#737373" stroke-width="1.5" fill="none"/></svg>
<svg class="abs" style="left:978.0px;top:681.2px" width="19" height="18" viewBox="0 0 19 18">
<rect x="0.3" y="4" width="2.5" height="12" fill="#b7bbc2"/><rect x="3.8" y="4" width="2.5" height="12.5" fill="#5ea547"/><rect x="7.7" y="1.5" width="2.3" height="14.5" fill="#b7bbc2"/><rect x="11.3" y="4" width="2.8" height="12.5" fill="#40a5e1"/><rect x="15.2" y="6" width="2.5" height="10" fill="#bcc0c6"/></svg>
<div class="row" style="left:1001.30px;top:678.00px;"><span class="s" style="width:164.90px;transform:scaleX(1.0074)">org.springframework:</span><span class="s" style="width:86.10px;transform:scaleX(0.9908)">spring-test:</span><span class="s" style="width:111.30px;transform:scaleX(0.8343)">5.2.10.RELEASE</span></div>
<svg class="abs" style="left:978.0px;top:706.2px" width="19" height="18" viewBox="0 0 19 18">
<rect x="0.3" y="4" width="2.5" height="12" fill="#b7bbc2"/><rect x="3.8" y="4" width="2.5" height="12.5" fill="#5ea547"/><rect x="7.7" y="1.5" width="2.3" height="14.5" fill="#b7bbc2"/><rect x="11.3" y="4" width="2.8" height="12.5" fill="#40a5e1"/><rect x="15.2" y="6" width="2.5" height="10" fill="#bcc0c6"/></svg>
<div class="row" style="left:1001.40px;top:703.00px;"><span class="s" style="width:93.65px;transform:scaleX(0.9863)">org.mybatis:</span><span class="s" style="width:63.45px;transform:scaleX(0.9489)">mybatis:</span><span class="s" style="width:33.69px;transform:scaleX(0.8709)">3.5.6</span></div>
<svg class="abs" style="left:978.0px;top:731.2px" width="19" height="18" viewBox="0 0 19 18">
<rect x="0.3" y="4" width="2.5" height="12" fill="#b7bbc2"/><rect x="3.8" y="4" width="2.5" height="12.5" fill="#5ea547"/><rect x="7.7" y="1.5" width="2.3" height="14.5" fill="#b7bbc2"/><rect x="11.3" y="4" width="2.8" height="12.5" fill="#40a5e1"/><rect x="15.2" y="6" width="2.5" height="10" fill="#bcc0c6"/></svg>
<div class="row" style="left:1001.40px;top:728.00px;"><span class="s" style="width:93.62px;transform:scaleX(0.9863)">org.mybatis:</span><span class="s" style="width:117.21px;transform:scaleX(0.9839)">mybatis-spring:</span><span class="s" style="width:33.76px;transform:scaleX(0.8728)">1.3.0</span></div>
<svg class="abs" style="left:978.0px;top:756.2px" width="19" height="18" viewBox="0 0 19 18">
<rect x="0.3" y="4" width="2.5" height="12" fill="#b7bbc2"/><rect x="3.8" y="4" width="2.5" height="12.5" fill="#5ea547"/><rect x="7.7" y="1.5" width="2.3" height="14.5" fill="#b7bbc2"/><rect x="11.3" y="4" width="2.8" height="12.5" fill="#40a5e1"/><rect x="15.2" y="6" width="2.5" height="10" fill="#bcc0c6"/></svg>
<div class="row" style="left:1001.38px;top:753.00px;"><span class="s" style="width:46.72px;transform:scaleX(0.9171)">mysql:</span><span class="s" style="width:170.59px;transform:scaleX(0.9924)">mysql-connector-java:</span><span class="s" style="width:42.79px;transform:scaleX(0.8851)">5.1.47</span></div>
<svg class="abs" style="left:978.0px;top:781.2px" width="19" height="18" viewBox="0 0 19 18">
<rect x="0.3" y="4" width="2.5" height="12" fill="#b7bbc2"/><rect x="3.8" y="4" width="2.5" height="12.5" fill="#5ea547"/><rect x="7.7" y="1.5" width="2.3" height="14.5" fill="#b7bbc2"/><rect x="11.3" y="4" width="2.8" height="12.5" fill="#40a5e1"/><rect x="15.2" y="6" width="2.5" height="10" fill="#bcc0c6"/></svg>
<div class="row" style="left:1001.40px;top:778.00px;"><span class="s" style="width:95.00px;transform:scaleX(0.9471)">com.alibaba:</span><span class="s" style="width:44.80px;transform:scaleX(0.9890)">druid:</span><span class="s" style="width:43.61px;transform:scaleX(0.9019)">1.1.16</span></div>
<svg class="abs" style="left:978.0px;top:806.2px" width="19" height="18" viewBox="0 0 19 18">
<rect x="0.3" y="4" width="2.5" height="12" fill="#b7bbc2"/><rect x="3.8" y="4" width="2.5" height="12.5" fill="#5ea547"/><rect x="7.7" y="1.5" width="2.3" height="14.5" fill="#b7bbc2"/><rect x="11.3" y="4" width="2.8" height="12.5" fill="#40a5e1"/><rect x="15.2" y="6" width="2.5" height="10" fill="#bcc0c6"/></svg>
<div class="row" style="left:1001.01px;top:803.00px;"><span class="s" style="width:93.85px;transform:scaleX(0.9080)">javax.servlet:</span><span class="s" style="width:127.44px;transform:scaleX(0.9568)">javax.servlet-api:</span><span class="s" style="width:33.74px;transform:scaleX(0.8656)">3.1.0</span><span class="s g" style="width:82.04px;transform:scaleX(0.9869)"> (provided)</span></div>
<svg class="abs" style="left:954.0px;top:833.2px" width="10" height="14" viewBox="-5 -7 10 14"><path d="M-2.5 -4.8 L2.6 0 L-2.5 4.8" stroke="#737373" stroke-width="1.5" fill="none"/></svg>
<svg class="abs" style="left:978.0px;top:831.2px" width="19" height="18" viewBox="0 0 19 18">
<rect x="0.3" y="4" width="2.5" height="12" fill="#b7bbc2"/><rect x="3.8" y="4" width="2.5" height="12.5" fill="#5ea547"/><rect x="7.7" y="1.5" width="2.3" height="14.5" fill="#b7bbc2"/><rect x="11.3" y="4" width="2.8" height="12.5" fill="#40a5e1"/><rect x="15.2" y="6" width="2.5" height="10" fill="#bcc0c6"/></svg>
<div class="row" style="left:1001.30px;top:828.00px;"><span class="s" style="width:209.69px;transform:scaleX(0.9656)">com.fasterxml.jackson.core:</span><span class="s" style="width:137.11px;transform:scaleX(0.9891)">jackson-databind:</span><span class="s" style="width:33.07px;transform:scaleX(0.8551)">2.9.0</span></div>
<svg class="abs" style="left:908.5px;top:859.3px" width="10" height="14" viewBox="-5 -7 10 14"><path d="M-2.5 -4.8 L2.6 0 L-2.5 4.8" stroke="#737373" stroke-width="1.5" fill="none"/></svg>
<svg class="abs" style="left:933.0px;top:856.3px" width="20" height="22" viewBox="0 0 20 22">
<path d="M7.2 2.3 H14 V12.8 H6.8 V19.7 H1.9 V7.8 H7.2 Z" fill="#b1b6be"/><path d="M6.2 2.3 V6.8 H1.9 Z" fill="#c9cdd3"/>
<text x="5.4" y="20.8" font-family="Liberation Sans, sans-serif" font-size="13.5" font-style="italic" font-weight="bold" fill="#389fe0" stroke="#389fe0" stroke-width="0.3">m</text></svg>
<div class="row" style="left:954.05px;top:854.10px;"><span class="s" style="width:117.69px;transform:scaleX(0.9509)">maven_03_pojo</span></div>
<svg class="abs" style="left:906.5px;top:884.5px" width="14" height="10" viewBox="-7 -5 14 10"><path d="M-4.8 -2.4 L0 2.6 L4.8 -2.4" stroke="#737373" stroke-width="1.5" fill="none"/></svg>
<svg class="abs" style="left:933.0px;top:879.2px" width="20" height="22" viewBox="0 0 20 22">
<path d="M7.2 2.3 H14 V12.8 H6.8 V19.7 H1.9 V7.8 H7.2 Z" fill="#b1b6be"/><path d="M6.2 2.3 V6.8 H1.9 Z" fill="#c9cdd3"/>
<text x="5.4" y="20.8" font-family="Liberation Sans, sans-serif" font-size="13.5" font-style="italic" font-weight="bold" fill="#389fe0" stroke="#389fe0" stroke-width="0.3">m</text></svg>
<div class="row" style="left:954.06px;top:877.00px;"><span class="s" style="width:112.98px;transform:scaleX(0.9422)">maven_04_dao</span></div>
<div class="abs" style="left:904px;top:880px;width:20px;height:6.3px;background:#fff"></div>
<svg class="abs" style="left:931.0px;top:907.2px" width="10" height="14" viewBox="-5 -7 10 14"><path d="M-2.5 -4.8 L2.6 0 L-2.5 4.8" stroke="#737373" stroke-width="1.5" fill="none"/></svg>
<svg class="abs" style="left:955.0px;top:904.2px" width="22" height="22" viewBox="0 0 22 22">
<path d="M0.2 3.9 H7 L9.6 6.4 H17.6 V16.7 H0.2 Z" fill="#aeb3ba"/><g transform="translate(13.8,16)"><circle r="5.9" fill="#fff"/><g fill="#3d9fe0"><circle r="3.5"/><rect x="-1.15" y="-5" width="2.3" height="10" rx="0.5" transform="rotate(0)"/><rect x="-1.15" y="-5" width="2.3" height="10" rx="0.5" transform="rotate(60)"/><rect x="-1.15" y="-5" width="2.3" height="10" rx="0.5" transform="rotate(120)"/></g><circle r="1.55" fill="#fff"/></g></svg>
<div class="row" style="left:977.14px;top:902.00px;"><span class="s" style="width:64.80px;transform:scaleX(0.9577)">Lifecycle</span></div>
<svg class="abs" style="left:931.0px;top:932.2px" width="10" height="14" viewBox="-5 -7 10 14"><path d="M-2.5 -4.8 L2.6 0 L-2.5 4.8" stroke="#737373" stroke-width="1.5" fill="none"/></svg>
<svg class="abs" style="left:955.0px;top:929.2px" width="22" height="22" viewBox="0 0 22 22">
<path d="M0.2 3.9 H7 L9.6 6.4 H17.6 V16.7 H0.2 Z" fill="#aeb3ba"/><g transform="translate(13.8,16)"><circle r="5.9" fill="#fff"/><g fill="#3d9fe0"><circle r="3.5"/><rect x="-1.15" y="-5" width="2.3" height="10" rx="0.5" transform="rotate(0)"/><rect x="-1.15" y="-5" width="2.3" height="10" rx="0.5" transform="rotate(60)"/><rect x="-1.15" y="-5" width="2.3" height="10" rx="0.5" transform="rotate(120)"/></g><circle r="1.55" fill="#fff"/></g></svg>
<div class="row" style="left:977.13px;top:927.00px;"><span class="s" style="width:55.07px;transform:scaleX(0.9655)">Plugins</span></div>
<svg class="abs" style="left:929.0px;top:959.5px" width="14" height="10" viewBox="-7 -5 14 10"><path d="M-4.8 -2.4 L0 2.6 L4.8 -2.4" stroke="#737373" stroke-width="1.5" fill="none"/></svg>
<svg class="abs" style="left:955.0px;top:954.2px" width="22" height="22" viewBox="0 0 22 22">
<path d="M0.2 3.7 H7 L9.6 6.2 H17.6 V17.2 H0.2 Z" fill="#aeb3ba"/><rect x="7.4" y="7.6" width="14" height="13" fill="#fff"/>
<path d="M7.4 6.2 H17.6 V8 H7.4 Z" fill="#aeb3ba"/>
<rect x="8.8" y="11" width="2.5" height="7.7" fill="#5da546"/><rect x="12.6" y="8.8" width="2.5" height="9.3" fill="#a9aeb6"/><rect x="16.3" y="10.8" width="2.7" height="7.5" fill="#3fa4e2"/></svg>
<div class="row" style="left:977.14px;top:952.00px;"><span class="s" style="width:107.27px;transform:scaleX(0.9648)">Dependencies</span></div>
<svg class="abs" style="left:954.0px;top:982.2px" width="10" height="14" viewBox="-5 -7 10 14"><path d="M-2.5 -4.8 L2.6 0 L-2.5 4.8" stroke="#737373" stroke-width="1.5" fill="none"/></svg>
<svg class="abs" style="left:978.0px;top:980.2px" width="19" height="18" viewBox="0 0 19 18">
<rect x="0.3" y="4" width="2.5" height="12" fill="#b7bbc2"/><rect x="3.8" y="4" width="2.5" height="12.5" fill="#5ea547"/><rect x="7.7" y="1.5" width="2.3" height="14.5" fill="#b7bbc2"/><rect x="11.3" y="4" width="2.8" height="12.5" fill="#40a5e1"/><rect x="15.2" y="6" width="2.5" height="10" fill="#bcc0c6"/></svg>
<div class="row" style="left:1001.30px;top:977.00px;"><span class="s" style="width:164.90px;transform:scaleX(1.0074)">org.springframework:</span><span class="s" style="width:89.80px;transform:scaleX(0.9650)">spring-core:</span><span class="s" style="width:103.80px;transform:scaleX(0.8389)">5.1.9.RELEASE</span></div>
<svg class="abs" style="left:954.0px;top:1007.2px" width="10" height="14" viewBox="-5 -7 10 14"><path d="M-2.5 -4.8 L2.6 0 L-2.5 4.8" stroke="#737373" stroke-width="1.5" fill="none"/></svg>
<svg class="abs" style="left:978.0px;top:1005.2px" width="19" height="18" viewBox="0 0 19 18">
<rect x="0.3" y="4" width="2.5" height="12" fill="#b7bbc2"/><rect x="3.8" y="4" width="2.5" height="12.5" fill="#5ea547"/><rect x="7.7" y="1.5" width="2.3" height="14.5" fill="#b7bbc2"/><rect x="11.3" y="4" width="2.8" height="12.5" fill="#40a5e1"/><rect x="15.2" y="6" width="2.5" height="10" fill="#bcc0c6"/></svg>
<div class="row" style="left:1001.30px;top:1002.00px;"><span class="s" style="width:164.90px;transform:scaleX(1.0074)">org.springframework:</span><span class="s" style="width:119.80px;transform:scaleX(0.9765)">spring-webmvc:</span><span class="s" style="width:112.51px;transform:scaleX(0.8433)">5.2.10.RELEASE</span></div>
<svg class="abs" style="left:954.0px;top:1032.2px" width="10" height="14" viewBox="-5 -7 10 14"><path d="M-2.5 -4.8 L2.6 0 L-2.5 4.8" stroke="#737373" stroke-width="1.5" fill="none"/></svg>
<svg class="abs" style="left:978.0px;top:1030.2px" width="19" height="18" viewBox="0 0 19 18">
<rect x="0.3" y="4" width="2.5" height="12" fill="#b7bbc2"/><rect x="3.8" y="4" width="2.5" height="12.5" fill="#5ea547"/><rect x="7.7" y="1.5" width="2.3" height="14.5" fill="#b7bbc2"/><rect x="11.3" y="4" width="2.8" height="12.5" fill="#40a5e1"/><rect x="15.2" y="6" width="2.5" height="10" fill="#bcc0c6"/></svg>
<div class="row" style="left:1001.30px;top:1027.00px;"><span class="s" style="width:164.90px;transform:scaleX(1.0074)">org.springframework:</span><span class="s" style="width:90.30px;transform:scaleX(0.9948)">spring-jdbc:</span><span class="s" style="width:111.30px;transform:scaleX(0.8343)">5.2.10.RELEASE</span></div>
<svg class="abs" style="left:954.0px;top:1057.2px" width="10" height="14" viewBox="-5 -7 10 14"><path d="M-2.5 -4.8 L2.6 0 L-2.5 4.8" stroke="#737373" stroke-width="1.5" fill="none"/></svg>
<svg class="abs" style="left:978.0px;top:1055.2px" width="19" height="18" viewBox="0 0 19 18">
<rect x="0.3" y="4" width="2.5" height="12" fill="#b7bbc2"/><rect x="3.8" y="4" width="2.5" height="12.5" fill="#5ea547"/><rect x="7.7" y="1.5" width="2.3" height="14.5" fill="#b7bbc2"/><rect x="11.3" y="4" width="2.8" height="12.5" fill="#40a5e1"/><rect x="15.2" y="6" width="2.5" height="10" fill="#bcc0c6"/></svg>
<div class="row" style="left:1001.30px;top:1052.00px;"><span class="s" style="width:164.90px;transform:scaleX(1.0074)">org.springframework:</span><span class="s" style="width:86.10px;transform:scaleX(0.9908)">spring-test:</span><span class="s" style="width:111.30px;transform:scaleX(0.8343)">5.2.10.RELEASE</span></div>
<svg class="abs" style="left:978.0px;top:1080.2px" width="19" height="18" viewBox="0 0 19 18">
<rect x="0.3" y="4" width="2.5" height="12" fill="#b7bbc2"/><rect x="3.8" y="4" width="2.5" height="12.5" fill="#5ea547"/><rect x="7.7" y="1.5" width="2.3" height="14.5" fill="#b7bbc2"/><rect x="11.3" y="4" width="2.8" height="12.5" fill="#40a5e1"/><rect x="15.2" y="6" width="2.5" height="10" fill="#bcc0c6"/></svg>
<div class="row" style="left:1001.40px;top:1077.00px;"><span class="s" style="width:93.65px;transform:scaleX(0.9863)">org.mybatis:</span><span class="s" style="width:63.45px;transform:scaleX(0.9489)">mybatis:</span><span class="s" style="width:33.69px;transform:scaleX(0.8709)">3.5.6</span></div>
<svg class="abs" style="left:978.0px;top:1105.2px" width="19" height="18" viewBox="0 0 19 18">
<rect x="0.3" y="4" width="2.5" height="12" fill="#b7bbc2"/><rect x="3.8" y="4" width="2.5" height="12.5" fill="#5ea547"/><rect x="7.7" y="1.5" width="2.3" height="14.5" fill="#b7bbc2"/><rect x="11.3" y="4" width="2.8" height="12.5" fill="#40a5e1"/><rect x="15.2" y="6" width="2.5" height="10" fill="#bcc0c6"/></svg>
<div class="row" style="left:1001.40px;top:1102.00px;"><span class="s" style="width:93.62px;transform:scaleX(0.9863)">org.mybatis:</span><span class="s" style="width:117.21px;transform:scaleX(0.9839)">mybatis-spring:</span><span class="s" style="width:33.76px;transform:scaleX(0.8728)">1.3.0</span></div>
<svg class="abs" style="left:978.0px;top:1130.2px" width="19" height="18" viewBox="0 0 19 18">
<rect x="0.3" y="4" width="2.5" height="12" fill="#b7bbc2"/><rect x="3.8" y="4" width="2.5" height="12.5" fill="#5ea547"/><rect x="7.7" y="1.5" width="2.3" height="14.5" fill="#b7bbc2"/><rect x="11.3" y="4" width="2.8" height="12.5" fill="#40a5e1"/><rect x="15.2" y="6" width="2.5" height="10" fill="#bcc0c6"/></svg>
<div class="row" style="left:1001.38px;top:1127.00px;"><span class="s" style="width:46.72px;transform:scaleX(0.9171)">mysql:</span><span class="s" style="width:170.59px;transform:scaleX(0.9924)">mysql-connector-java:</span><span class="s" style="width:42.79px;transform:scaleX(0.8851)">5.1.47</span></div>
<svg class="abs" style="left:978.0px;top:1155.2px" width="19" height="18" viewBox="0 0 19 18">
<rect x="0.3" y="4" width="2.5" height="12" fill="#b7bbc2"/><rect x="3.8" y="4" width="2.5" height="12.5" fill="#5ea547"/><rect x="7.7" y="1.5" width="2.3" height="14.5" fill="#b7bbc2"/><rect x="11.3" y="4" width="2.8" height="12.5" fill="#40a5e1"/><rect x="15.2" y="6" width="2.5" height="10" fill="#bcc0c6"/></svg>
<div class="row" style="left:1001.40px;top:1152.00px;"><span class="s" style="width:95.00px;transform:scaleX(0.9471)">com.alibaba:</span><span class="s" style="width:44.80px;transform:scaleX(0.9890)">druid:</span><span class="s" style="width:43.61px;transform:scaleX(0.9019)">1.1.16</span></div>
<svg class="abs" style="left:978.0px;top:1180.2px" width="19" height="18" viewBox="0 0 19 18">
<rect x="0.3" y="4" width="2.5" height="12" fill="#b7bbc2"/><rect x="3.8" y="4" width="2.5" height="12.5" fill="#5ea547"/><rect x="7.7" y="1.5" width="2.3" height="14.5" fill="#b7bbc2"/><rect x="11.3" y="4" width="2.8" height="12.5" fill="#40a5e1"/><rect x="15.2" y="6" width="2.5" height="10" fill="#bcc0c6"/></svg>
<div class="row" style="left:1001.01px;top:1177.00px;"><span class="s" style="width:93.85px;transform:scaleX(0.9080)">javax.servlet:</span><span class="s" style="width:127.44px;transform:scaleX(0.9568)">javax.servlet-api:</span><span class="s" style="width:33.74px;transform:scaleX(0.8656)">3.1.0</span><span class="s g" style="width:82.04px;transform:scaleX(0.9869)"> (provided)</span></div>
<svg class="abs" style="left:954.0px;top:1207.2px" width="10" height="14" viewBox="-5 -7 10 14"><path d="M-2.5 -4.8 L2.6 0 L-2.5 4.8" stroke="#737373" stroke-width="1.5" fill="none"/></svg>
<svg class="abs" style="left:978.0px;top:1205.2px" width="19" height="18" viewBox="0 0 19 18">
<rect x="0.3" y="4" width="2.5" height="12" fill="#b7bbc2"/><rect x="3.8" y="4" width="2.5" height="12.5" fill="#5ea547"/><rect x="7.7" y="1.5" width="2.3" height="14.5" fill="#b7bbc2"/><rect x="11.3" y="4" width="2.8" height="12.5" fill="#40a5e1"/><rect x="15.2" y="6" width="2.5" height="10" fill="#bcc0c6"/></svg>
<div class="row" style="left:1001.30px;top:1202.00px;"><span class="s" style="width:209.69px;transform:scaleX(0.9656)">com.fasterxml.jackson.core:</span><span class="s" style="width:137.11px;transform:scaleX(0.9891)">jackson-databind:</span><span class="s" style="width:33.07px;transform:scaleX(0.8551)">2.9.0</span></div>
</div></div>
<svg class="abs" style="left:0;top:0" width="1408" height="1228" viewBox="0 0 1408 1228" fill="none" stroke="#e8131f" stroke-width="2.9" stroke-linecap="round" stroke-linejoin="round">
<path d="M218.5 281 C218.5 278.5 220.5 277 225 276.8 C240 275.6 250 275 262 275 L539 274.9 C552 275.2 566 276.6 572.5 277.4 C574.6 277.7 575.2 278.6 575.2 280.5 L575.2 296.8 C575.2 298.8 574.4 299.6 572.5 299.9 C562 301.4 548 302.4 535 302.7 L440 303.4 L262 303.9 C248 303.6 236 302.6 226 301 C221 300.3 218.5 298.8 218.5 296 Z"/>
<path d="M576.8 288.7 C587.3 286.1 608.0 281.0 640.0 272.8 C672.0 264.6 717.1 252.6 768.9 239.6 C820.7 226.6 920.3 202.4 950.6 195.0"/>
<path d="M576.3 290.3 C585.0 297.6 610.2 318.9 628.7 334.3 C647.2 349.7 665.4 364.6 687.3 382.6 C709.2 400.6 739.7 425.5 760.0 442.2 C780.3 458.9 792.6 469.2 808.9 482.9 C825.2 496.6 841.4 511.1 857.7 524.4 C874.0 537.7 890.3 549.4 906.6 562.7 C922.9 576.0 945.3 595.9 955.4 604.2 C965.5 612.5 965.1 611.0 967.1 612.4"/>
<path d="M576.6 292.0 C580.6 299.8 591.1 321.1 600.8 338.7 C610.4 356.2 623.3 377.8 634.5 397.3 C645.7 416.9 657.0 436.4 668.2 456.0 C679.5 475.6 691.0 495.1 702.0 514.6 C713.0 534.1 726.2 559.1 734.2 573.3 C742.2 587.5 741.5 585.8 749.8 600.0 C758.1 614.2 772.8 639.2 784.0 658.7 C795.2 678.2 806.5 697.8 817.2 717.3 C828.0 736.8 838.3 758.1 848.5 776.0 C858.7 793.9 869.2 809.5 878.2 824.7 C887.2 839.9 894.7 852.9 902.6 867.0 C910.5 881.1 918.1 895.3 925.9 909.4 C933.6 923.5 941.7 938.5 949.1 951.7 C956.5 964.9 966.8 982.6 970.3 988.8"/>
</svg>
<svg class="abs" style="left:1230px;top:100px" width="30" height="32" viewBox="1230 100 30 32"><path d="M1238.6 106.6 L1238.6 122.3 L1242.5 119.1 L1245.1 124.4 L1247.7 123.3 L1245.5 118.4 L1249.6 117.8 Z" fill="#fff" stroke="#444" stroke-width="0.95" stroke-linejoin="round"/></svg>
</body></html>
